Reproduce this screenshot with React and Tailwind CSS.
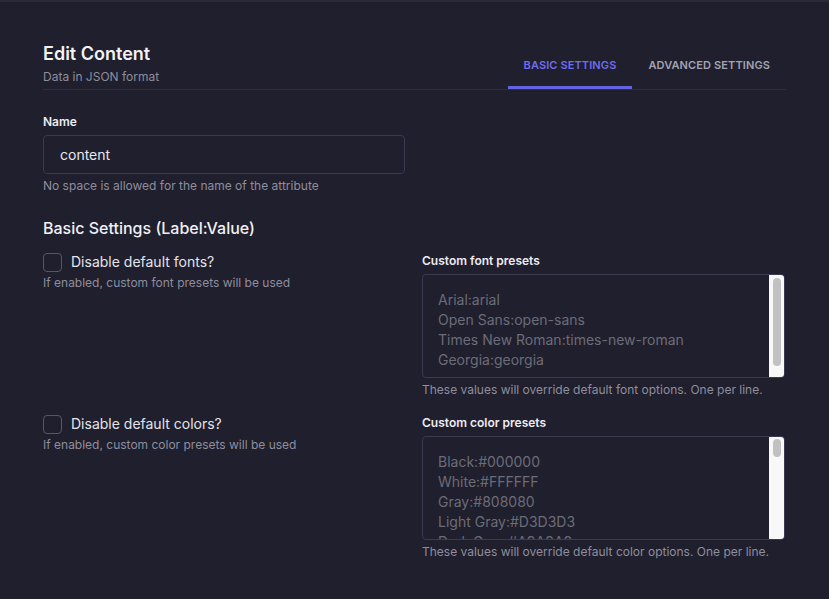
const fontPresets = ['Arial:arial', 'Open Sans:open-sans', 'Times New Roman:times-new-roman', 'Georgia:georgia'];
const colorPresets = ['Black:#000000', 'White:#FFFFFF', 'Gray:#808080', 'Light Gray:#D3D3D3', 'Dark Gray:#A9A9A9'];

function Checkbox({ label, help }) {
  return (
    <div>
      <label className="flex items-center gap-[9px]">
        <span className="h-[19px] w-[19px] rounded-[4px] border border-[#55556c]" />
        <span className="text-[14px] leading-[20px] text-[#e4e4ea]">{label}</span>
      </label>
      <p className="mt-[3px] text-[12px] leading-[16px] text-[#8e8e9e]">{help}</p>
    </div>
  );
}

function PresetBox({ label, lines, help, thumbTop, thumbHeight }) {
  return (
    <div>
      <p className="text-[12px] font-semibold leading-[16px] text-[#ececf1]">{label}</p>
      <div className="relative mt-[5px] h-[104px] overflow-hidden rounded-[4px] border border-[#3a3a52]">
        <div className="pl-[15px] pt-[15px] text-[14px] leading-[20px] text-[#6c6c78]">
          {lines.map((l) => (
            <div key={l}>{l}</div>
          ))}
        </div>
        <div className="absolute bottom-0 right-0 top-0 w-[15px] bg-[#f8f8f8]">
          <div
            className="absolute left-[4px] w-[8px] rounded-full bg-[#c1c1c1]"
            style={{ top: thumbTop, height: thumbHeight }}
          />
        </div>
      </div>
      <p className="mt-[4px] text-[12px] leading-[16px] text-[#8e8e9e]">{help}</p>
    </div>
  );
}

export default function App() {
  return (
    <div
      className="min-h-[599px] border-t-2 border-[#2a2a3a] bg-[#1f1f2d] px-[43px] pt-[38px] leading-[16px]"
      style={{ fontFamily: 'Inter, "Noto Sans", sans-serif' }}
    >
      <header className="flex items-end justify-between border-b border-[#2d2d40]">
        <div className="pb-[4px]">
          <h1 className="text-[18px] font-semibold leading-[28px] text-[#f2f2f5]">Edit Content</h1>
          <p className="mt-px text-[12px] leading-[16px] text-[#8e8e9e]">Data in JSON format</p>
        </div>
        <nav className="flex text-[11px] font-semibold leading-[16px]">
          <button className="border-b-[3px] border-[#6363e0] px-4 pb-[13px] uppercase tracking-[0.01em] text-[#6d6df0]">
            Basic Settings
          </button>
          <button className="border-b-[3px] border-transparent px-4 pb-[13px] uppercase tracking-[0.01em] text-[#a3a3b3]">
            Advanced Settings
          </button>
        </nav>
      </header>

      <section className="mt-[24px] w-[362px]">
        <label className="block text-[12px] font-semibold leading-[16px] text-[#ececf1]">Name</label>
        <div className="mt-[5px] flex h-[39px] items-center rounded-[4px] border border-[#3a3a50] px-[16px] text-[14px] text-[#e8e8ee]">
          content
        </div>
        <p className="mt-[4px] text-[12px] leading-[16px] text-[#8e8e9e]">No space is allowed for the name of the attribute</p>
      </section>

      <h2 className="mt-[22px] text-[16px] font-medium leading-[24px] text-[#f0f0f4]">Basic Settings (Label:Value)</h2>

      <div className="mt-[13px] grid grid-cols-[362px_363px] gap-x-[17px] gap-y-[17px]">
        <div className="-mt-px">
          <Checkbox label="Disable default fonts?" help="If enabled, custom font presets will be used" />
        </div>
        <PresetBox
          label="Custom font presets"
          lines={fontPresets}
          help="These values will override default font options. One per line."
          thumbTop={3}
          thumbHeight={88}
        />
        <div className="-mt-px">
          <Checkbox label="Disable default colors?" help="If enabled, custom color presets will be used" />
        </div>
        <PresetBox
          label="Custom color presets"
          lines={colorPresets}
          help="These values will override default color options. One per line."
          thumbTop={2}
          thumbHeight={18}
        />
      </div>
    </div>
  );
}
